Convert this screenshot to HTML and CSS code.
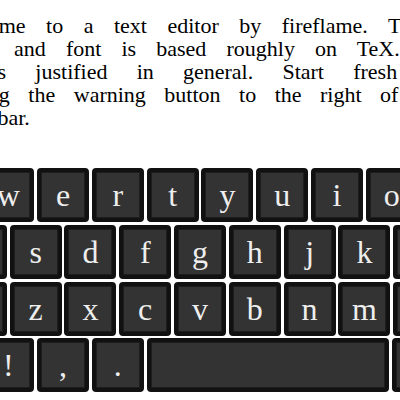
FILE: index.html
```html
<!DOCTYPE html>
<html lang="en">
<head>
<meta charset="utf-8">
<title>Text editor</title>
<link rel="stylesheet" href="styles.css">
</head>
<body>
<main class="page">
  <p class="intro">
    <span class="line line-1">Welcome to a text editor by fireflame. This</span>
    <span class="line line-2">layout and font is based roughly on TeX.</span>
    <span class="line line-3">Text is justified in general. Start fresh by</span>
    <span class="line line-4">clicking the warning button to the right of the</span>
    <span class="line line-5">menu bar.</span>
  </p>
  <div class="keyboard">
    <div class="row">
      <div class="key">q</div><div class="key">w</div><div class="key">e</div><div class="key">r</div><div class="key">t</div><div class="key">y</div><div class="key">u</div><div class="key">i</div><div class="key">o</div><div class="key">p</div>
    </div>
    <div class="row">
      <div class="key">a</div><div class="key">s</div><div class="key">d</div><div class="key">f</div><div class="key">g</div><div class="key">h</div><div class="key">j</div><div class="key">k</div><div class="key">l</div>
    </div>
    <div class="row">
      <div class="key" aria-label="shift"></div><div class="key">z</div><div class="key">x</div><div class="key">c</div><div class="key">v</div><div class="key">b</div><div class="key">n</div><div class="key">m</div><div class="key" aria-label="backspace"></div>
    </div>
    <div class="row row-bottom">
      <div class="key">?</div><div class="key">!</div><div class="key">,</div><div class="key">.</div><div class="key key-space" aria-label="space"></div><div class="key key-enter" aria-label="enter"></div>
    </div>
  </div>
</main>
</body>
</html>
```
FILE: styles.css
```css
html, body {
  margin: 0;
  padding: 0;
  background: #fff;
  overflow: hidden;
}

.page {
  width: 400px;
  height: 400px;
  overflow: hidden;
}

.intro {
  margin: 14.4px 0 0 -57px;
  width: 520px;
  font-family: "Liberation Serif", serif;
  font-size: 22px;
  line-height: 23px;
  color: #000;
  text-align: left;
}

.line {
  display: block;
  white-space: nowrap;
}

.line-1 { word-spacing: 15px; }
.line-2 { word-spacing: 14.6px; text-indent: -4px; }
.line-3 { word-spacing: 23.7px; text-indent: -19.5px; }
.line-4 { word-spacing: 13px; text-indent: -4px; }
.line-5 { word-spacing: 0; }

.keyboard {
  margin: 38.6px 0 0 -72.6px;
  width: 545.2px;
  display: flex;
  flex-direction: column;
  align-items: center;
  gap: 2.8px;
}

.row {
  display: flex;
  gap: 2.8px;
}

.row-bottom {
  align-self: stretch;
}

.key {
  box-sizing: border-box;
  flex: 0 0 52px;
  width: 52px;
  height: 54px;
  border: 4px solid #111;
  border-radius: 4px;
  background: #333;
  box-shadow: inset 0 0 0 1px #1d1d1d;
  color: #eee;
  font-family: "Liberation Serif", serif;
  font-size: 32px;
  line-height: 46px;
  text-align: center;
}

.key-space {
  flex: 1 1 auto;
}

.key-enter {
  flex: 0 0 80.4px;
}
```
